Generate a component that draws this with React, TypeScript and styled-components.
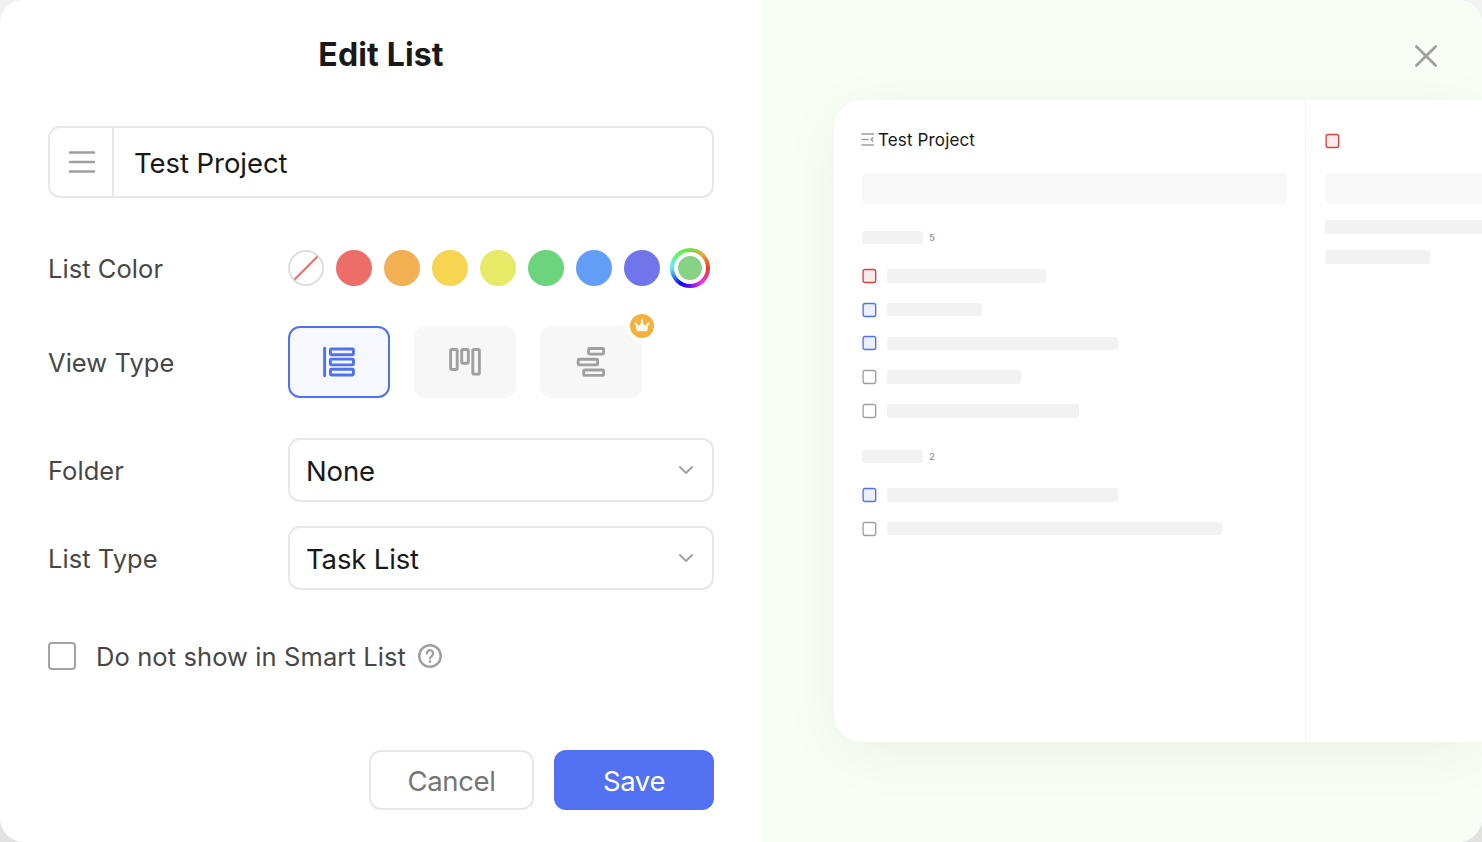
import React from "react";
import styled, { createGlobalStyle, css } from "styled-components";

const GlobalStyle = createGlobalStyle`
  *, *::before, *::after { box-sizing: border-box; }
  body {
    margin: 0;
    background: linear-gradient(#f2f2f2, #e2e2e2);
    font-family: Inter, "Liberation Sans", sans-serif;
    color: #191919;
  }
  button, input { font: inherit; color: inherit; }
`;

const Dialog = styled.div`
  display: flex;
  width: 1482px;
  height: 842px;
  border-radius: 24px;
  overflow: hidden;
  background: #fff;
`;

const FormPane = styled.form`
  flex: 0 0 762px;
  padding: 0 48px;
  display: flex;
  flex-direction: column;
`;

const Title = styled.h1`
  margin: 34px 0 0;
  height: 42px;
  line-height: 42px;
  font-size: 32px;
  font-weight: 700;
  letter-spacing: 0.16px;
  text-align: center;
`;

const NameField = styled.div`
  margin-top: 50px;
  display: flex;
  height: 72px;
  border: 2px solid #e8e8e8;
  border-radius: 12px;
`;

const NameIcon = styled.div`
  flex: 0 0 64px;
  display: flex;
  align-items: center;
  justify-content: center;
  padding-left: 2px;
  border-right: 2px solid #e8e8e8;
`;

const NameText = styled.div`
  padding: 1px 0 0 20px;
  line-height: 68px;
  font-size: 27.5px;
  letter-spacing: -0.06px;
`;

const Row = styled.div<{ $top: number; $height: number }>`
  display: flex;
  align-items: center;
  margin-top: ${(p) => p.$top}px;
  height: ${(p) => p.$height}px;
`;

const Label = styled.div`
  flex: 0 0 240px;
  padding-top: 2px;
  font-size: 25.5px;
  line-height: 32px;
  letter-spacing: 0.05px;
  color: #474747;
`;

const Swatches = styled.div`
  display: flex;
  align-items: center;
  gap: 12px;
`;

const Swatch = styled.div<{ $color: string }>`
  width: 36px;
  height: 36px;
  border-radius: 50%;
  background: ${(p) => p.$color};
`;

const CustomSwatch = styled.div`
  width: 40px;
  height: 40px;
  margin-left: -2px;
  padding: 4px;
  border-radius: 50%;
  background: conic-gradient(#74dc42, #e8a83c 45deg, #ee3828 90deg, #f22ee4 142deg, #6c10f0 180deg, #0a08fa 212deg, #5cecff 270deg, #5cf868 315deg, #74dc42);
`;

const CustomSwatchCore = styled.div`
  width: 32px;
  height: 32px;
  border: 4px solid #fff;
  border-radius: 50%;
  background: #87d285;
`;

const ViewOptions = styled.div`
  display: flex;
  gap: 24px;
`;

const ViewOption = styled.div<{ $active?: boolean }>`
  position: relative;
  width: 102px;
  height: 72px;
  display: flex;
  align-items: center;
  justify-content: center;
  border-radius: 12px;
  background: #f7f7f7;
  color: #a0a0a0;
  ${(p) =>
    p.$active &&
    css`
      border: 2px solid #4f72f3;
      background: #f6f8fe;
      color: #4f72f3;
    `}
`;

const CrownBadge = styled.div`
  position: absolute;
  top: -16px;
  right: -16px;
  width: 32px;
  height: 32px;
  border: 4px solid #fff;
  border-radius: 50%;
  background: #f4b13e;
  svg { display: block; }
`;

const Select = styled.div`
  flex: 1;
  display: flex;
  align-items: center;
  justify-content: space-between;
  height: 64px;
  padding: 0 18px 0 16px;
  border: 2px solid #e8e8e8;
  border-radius: 12px;
`;

const SelectText = styled.span`
  padding-top: 2px;
  font-size: 27.5px;
  line-height: 34px;
  letter-spacing: -0.15px;
`;

const CheckRow = styled.div`
  display: flex;
  align-items: center;
  height: 28px;
  margin-top: 52px;
`;

const Checkbox = styled.div`
  width: 28px;
  height: 28px;
  border: 2px solid #a3a3a3;
  border-radius: 4px;
`;

const CheckLabel = styled.span`
  padding-top: 2px;
  margin: 0 11px 0 20px;
  font-size: 25.5px;
  line-height: 32px;
  letter-spacing: 0.1px;
  color: #474747;
  white-space: nowrap;
`;

const Actions = styled.div`
  display: flex;
  justify-content: flex-end;
  gap: 20px;
  margin-top: 80px;
`;

const Button = styled.button<{ $primary?: boolean }>`
  width: ${(p) => (p.$primary ? 160 : 165)}px;
  height: 60px;
  padding: 2px 0 0;
  border: ${(p) => (p.$primary ? "0" : "2px solid #e8e8e8")};
  border-radius: 12px;
  background: ${(p) => (p.$primary ? "#5272f3" : "#fff")};
  color: ${(p) => (p.$primary ? "#fff" : "#757575")};
  font-size: 27.5px;
  line-height: 34px;
  letter-spacing: -0.35px;
`;

const PreviewPane = styled.div`
  flex: 1;
  min-width: 0;
  display: flex;
  flex-direction: column;
  align-items: flex-end;
  background: #f8fdf6;
`;

const CloseButton = styled.div`
  margin: 44px 44px 32px 0;
  width: 24px;
  height: 24px;
  svg { display: block; }
`;

const PreviewCard = styled.div`
  display: flex;
  width: 648px;
  height: 642px;
  border-radius: 28px 0 0 28px;
  background: #fff;
  box-shadow: 0 12px 60px rgba(0, 0, 0, 0.05);
`;

const TaskColumn = styled.div`
  flex: 0 0 472px;
  padding: 29px 18px 0 28px;
  border-right: 1px solid #f4f4f4;
`;

const DetailColumn = styled.div`
  flex: 1;
  padding: 33px 0 0 19px;
`;

const PreviewHeader = styled.div`
  display: flex;
  align-items: center;
  height: 22px;
  gap: 4px;
  margin-left: -1px;
`;

const PreviewTitle = styled.span`
  font-size: 17px;
  line-height: 22px;
  letter-spacing: 0.14px;
`;

const AddBar = styled.div<{ $top: number; $flush?: boolean }>`
  margin-top: ${(p) => p.$top}px;
  height: 30.5px;
  border-radius: ${(p) => (p.$flush ? "5px 0 0 5px" : "5px")};
  background: #f8f8f8;
`;

const Bar = styled.div<{ $width: number }>`
  width: ${(p) => p.$width}px;
  height: 13.5px;
  border-radius: 3px;
  background: #f2f2f2;
`;

const GroupHeader = styled.div<{ $top: number }>`
  display: flex;
  align-items: center;
  gap: 6px;
  height: 14px;
  margin: ${(p) => p.$top}px 0 14.6px;
`;

const GroupCount = styled.span`
  padding-top: 1px;
  font-size: 9.5px;
  font-weight: 600;
  line-height: 14px;
  color: #a0a0a0;
`;

const TaskRow = styled.div`
  display: flex;
  align-items: center;
  gap: 9.7px;
  height: 33.75px;
`;

const DetailBars = styled.div`
  display: flex;
  flex-direction: column;
  gap: 16.5px;
  margin-top: 16.9px;
`;

type Tone = "red" | "blue" | "gray";

const tones: Record<Tone, [string, string]> = {
  red: ["#d5423e", "#faeae9"],
  blue: ["#4f72f0", "#ebf0fe"],
  gray: ["#a0a0a0", "#ffffff"],
};

const TaskBox = ({ tone }: { tone: Tone }) => (
  <svg width="15" height="16" viewBox="0 0 15 16">
    <rect x="1.1" y="1.5" width="12.6" height="13" rx="2.1" fill={tones[tone][1]} stroke={tones[tone][0]} strokeWidth="1.35" />
  </svg>
);

const Chevron = () => (
  <svg width="16" height="12" viewBox="0 0 16 12" fill="none" stroke="#a0a0a0" strokeWidth="1.9" strokeLinecap="round" strokeLinejoin="round">
    <path d="M2 3l6 6 6-6" />
  </svg>
);

const groups: { count: number; top: number; tasks: [Tone, number][] }[] = [
  { count: 5, top: 26.6, tasks: [["red", 159.5], ["blue", 95.5], ["blue", 231.5], ["gray", 134.7], ["gray", 192.3]] },
  { count: 2, top: 21.7, tasks: [["blue", 231.5], ["gray", 335.5]] },
];

const colors = ["#ed6d68", "#f2b052", "#f7d551", "#e6ea67", "#6cd47c", "#629ef8", "#7076ea"];

export default function App() {
  return (
    <>
      <GlobalStyle />
      <Dialog>
        <FormPane>
          <Title>Edit List</Title>
          <NameField>
            <NameIcon>
              <svg width="28" height="24" viewBox="0 0 28 24" stroke="#a0a0a0" strokeWidth="2.6" strokeLinecap="round">
                <path d="M2 2.5h24M2 12h24M2 21.5h24" />
              </svg>
            </NameIcon>
            <NameText>Test Project</NameText>
          </NameField>
          <Row $top={50} $height={40}>
            <Label>List Color</Label>
            <Swatches>
              <svg width="36" height="36" viewBox="0 0 36 36" fill="none">
                <circle cx="18" cy="18" r="17" stroke="#dedede" strokeWidth="2" />
                <path d="M6.5 29.5l23-23" stroke="#ed6d68" strokeWidth="2" />
              </svg>
              {colors.map((c) => (
                <Swatch key={c} $color={c} />
              ))}
              <CustomSwatch>
                <CustomSwatchCore />
              </CustomSwatch>
            </Swatches>
          </Row>
          <Row $top={38} $height={72}>
            <Label>View Type</Label>
            <ViewOptions>
              <ViewOption $active>
                <svg width="36" height="36" viewBox="0 0 36 36" fill="none" stroke="currentColor" strokeWidth="2.9">
                  <path d="M3.6 4.2v27.6" strokeLinecap="round" />
                  <rect x="9.4" y="5" width="23" height="5.8" rx="1" />
                  <rect x="9.4" y="15.1" width="23" height="5.8" rx="1" />
                  <rect x="9.4" y="25.2" width="23" height="5.8" rx="1" />
                </svg>
              </ViewOption>
              <ViewOption>
                <svg width="36" height="36" viewBox="0 0 36 36" fill="none" stroke="currentColor" strokeWidth="2.9">
                  <rect x="3.6" y="5.5" width="6.6" height="20" rx="1.4" />
                  <rect x="14.7" y="5.5" width="6.6" height="13.7" rx="1.4" />
                  <rect x="25.8" y="5.5" width="6.6" height="24.6" rx="1.4" />
                </svg>
              </ViewOption>
              <ViewOption>
                <svg width="36" height="36" viewBox="0 0 36 36" fill="none" stroke="currentColor" strokeWidth="2.9">
                  <rect x="15.6" y="4.5" width="15" height="5.6" rx="1" />
                  <rect x="5.2" y="15.3" width="19.4" height="5.6" rx="1" />
                  <rect x="10.7" y="26" width="19.9" height="5.4" rx="1" />
                </svg>
                <CrownBadge>
                  <svg width="24" height="24" viewBox="0 0 24 24" fill="#fffaf0">
                    <path d="M6.8 17.2L5.5 10.8A1.2 1.2 0 1 1 6.8 10L9.8 11.6L11.4 7.6A1.2 1.2 0 1 1 12.6 7.6L14.2 11.6L17.2 10A1.2 1.2 0 1 1 18.5 10.8L17.2 17.2Z" />
                  </svg>
                </CrownBadge>
              </ViewOption>
            </ViewOptions>
          </Row>
          <Row $top={40} $height={64}>
            <Label>Folder</Label>
            <Select>
              <SelectText>None</SelectText>
              <Chevron />
            </Select>
          </Row>
          <Row $top={24} $height={64}>
            <Label>List Type</Label>
            <Select>
              <SelectText>Task List</SelectText>
              <Chevron />
            </Select>
          </Row>
          <CheckRow>
            <Checkbox />
            <CheckLabel>Do not show in Smart List</CheckLabel>
            <svg width="26" height="26" viewBox="0 0 26 26" fill="none" stroke="#a0a0a0" strokeWidth="2.5">
              <circle cx="13" cy="13" r="10.75" />
              <path d="M9.9 10.4a3.1 3.1 0 1 1 5 2.4c-1.2.9-1.9 1.4-1.9 2.6" strokeLinecap="round" strokeWidth="2.3" />
              <circle cx="13" cy="18.6" r="1.4" fill="#a0a0a0" stroke="none" />
            </svg>
          </CheckRow>
          <Actions>
            <Button type="button">Cancel</Button>
            <Button type="button" $primary>Save</Button>
          </Actions>
        </FormPane>
        <PreviewPane>
          <CloseButton>
            <svg width="24" height="24" viewBox="0 0 24 24" stroke="#a0a19f" strokeWidth="2.8" strokeLinecap="round">
              <path d="M2.4 2.4l19.2 19.2M21.6 2.4L2.4 21.6" />
            </svg>
          </CloseButton>
          <PreviewCard>
            <TaskColumn>
              <PreviewHeader>
                <svg width="13" height="14" viewBox="0 0 13 14" fill="none" stroke="#a0a0a0" strokeWidth="1.5">
                  <path d="M.3 1.1h12.7M.3 6.6h7.4M.3 12h12.7M12.3 4.4L10.1 6.6L12.3 8.8" />
                </svg>
                <PreviewTitle>Test Project</PreviewTitle>
              </PreviewHeader>
              <AddBar $top={22.4} />
              {groups.map((g) => (
                <React.Fragment key={g.count}>
                  <GroupHeader $top={g.top}>
                    <Bar $width={61} />
                    <GroupCount>{g.count}</GroupCount>
                  </GroupHeader>
                  {g.tasks.map(([tone, width], i) => (
                    <TaskRow key={i}>
                      <TaskBox tone={tone} />
                      <Bar $width={width} />
                    </TaskRow>
                  ))}
                </React.Fragment>
              ))}
            </TaskColumn>
            <DetailColumn>
              <TaskBox tone="red" />
              <AddBar $top={20} $flush />
              <DetailBars>
                <Bar $width={158} />
                <Bar $width={104.5} />
              </DetailBars>
            </DetailColumn>
          </PreviewCard>
        </PreviewPane>
      </Dialog>
    </>
  );
}
